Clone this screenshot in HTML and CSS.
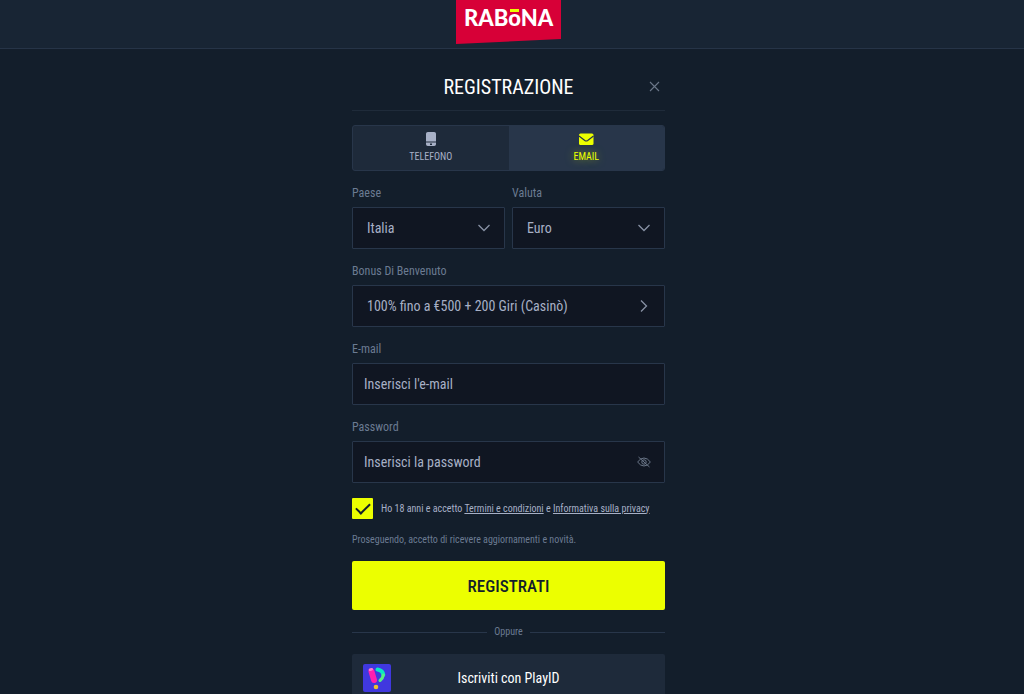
FILE: index.html
```html
<!DOCTYPE html>
<html lang="it">
<head>
<meta charset="utf-8">
<meta name="viewport" content="width=device-width, initial-scale=1">
<title>Registrazione</title>
<link rel="stylesheet" href="styles.css">
</head>
<body>
<header class="topbar">
  <a class="logo" href="#">
    <svg class="logo-shape" viewBox="0 0 105 45" preserveAspectRatio="none" aria-hidden="true"><path d="M0 0H105V39L0 44Z" fill="#d70037"/></svg>
    <span class="logo-text">RAB<span class="logo-o">o</span>NA</span>
  </a>
</header>
<main class="page">
  <form class="signup">
    <div class="signup-head">
      <h1 class="title">REGISTRAZIONE</h1>
      <button class="close" type="button" aria-label="Chiudi">
        <svg width="11" height="11" viewBox="0 0 11 11"><path d="M1 1L10 10M10 1L1 10" stroke="#6b7789" stroke-width="1.1"/></svg>
      </button>
    </div>
    <div class="tabs">
      <button class="tab" type="button">
        <svg width="16" height="16" viewBox="0 0 16 16"><path d="M4.800 1H11.200Q13 1 13 2.800V10.500H3V2.800Q3 1 4.800 1Z" fill="#a7b0c6"/><path fill-rule="evenodd" d="M3 11.500H13V13.200Q13 15 11.200 15H4.800Q3 15 3 13.200ZM7 12.500V14H9V12.500Z" fill="#a7b0c6"/></svg>
        <span>TELEFONO</span>
      </button>
      <button class="tab tab-active" type="button">
        <svg width="16" height="16" viewBox="0 0 16 16"><rect x="1" y="2.500" width="14.500" height="11.500" rx="1.500" fill="#ecff00"/><path d="M1 5L6.800 9.500Q8.250 10.500 9.700 9.500L15.500 5" fill="none" stroke="#28364a" stroke-width="1.200"/></svg>
        <span>EMAIL</span>
      </button>
    </div>
    <div class="pair">
      <div class="field">
        <label class="label" for="country">Paese</label>
        <div class="control">
          <select class="box" id="country"><option>Italia</option></select>
          <svg class="chevron" width="14" height="14" viewBox="0 0 14 14"><path d="M1.500 4L7 9.500L12.500 4" fill="none" stroke="#8791a4" stroke-width="1.300"/></svg>
        </div>
      </div>
      <div class="field">
        <label class="label" for="currency">Valuta</label>
        <div class="control">
          <select class="box" id="currency"><option>Euro</option></select>
          <svg class="chevron" width="14" height="14" viewBox="0 0 14 14"><path d="M1.500 4L7 9.500L12.500 4" fill="none" stroke="#8791a4" stroke-width="1.300"/></svg>
        </div>
      </div>
    </div>
    <div class="field">
      <label class="label" for="bonus">Bonus Di Benvenuto</label>
      <div class="control">
        <button class="box" id="bonus" type="button">100% fino a €500 + 200 Giri (Casinò)</button>
        <svg class="chevron" width="14" height="14" viewBox="0 0 14 14"><path d="M4 1.500L9.500 7L4 12.500" fill="none" stroke="#8791a4" stroke-width="1.300"/></svg>
      </div>
    </div>
    <div class="field">
      <label class="label" for="email">E-mail</label>
      <div class="control">
        <input class="box box-input" id="email" type="email" placeholder="Inserisci l'e-mail">
      </div>
    </div>
    <div class="field">
      <label class="label" for="password">Password</label>
      <div class="control">
        <input class="box box-input" id="password" type="password" placeholder="Inserisci la password">
        <button class="eye" type="button" aria-label="Mostra password">
          <svg width="14" height="12" viewBox="0 0 14 12" fill="none" stroke="#6b7789"><path d="M.6 6Q3.500 2 7 2T13.400 6Q10.500 10 7 10T.6 6Z"/><circle cx="7" cy="6" r="2.200"/><path d="M1.500 1L12.500 11"/></svg>
        </button>
      </div>
    </div>
    <div class="terms">
      <input class="tick" id="terms" type="checkbox" checked>
      <label class="terms-text" for="terms">Ho 18 anni e accetto <a href="#">Termini e condizioni</a> e <a href="#">Informativa sulla privacy</a></label>
    </div>
    <p class="note">Proseguendo, accetto di ricevere aggiornamenti e novità.</p>
    <button class="submit" type="submit">REGISTRATI</button>
    <div class="or"><span>Oppure</span></div>
    <button class="playid" type="button">
      <svg width="28" height="28" viewBox="0 0 28 28"><rect width="28" height="28" rx="2" fill="#4038df"/><path d="M8.500 7.500L11 16" stroke="#ff1fb0" stroke-width="6" stroke-linecap="round"/><path d="M7 5.800L8.800 5.200" stroke="#ff7ccf" stroke-width="2.500" stroke-linecap="round"/><path d="M14.500 5.500Q20 6.500 20.300 11" fill="none" stroke="#0ce8c4" stroke-width="4" stroke-linecap="round"/><path d="M20.300 11Q20 14 17 16.500" fill="none" stroke="#58f084" stroke-width="3" stroke-linecap="round"/><circle cx="13" cy="23" r="2.300" fill="#e9c52d"/></svg>
      <span>Iscriviti con PlayID</span>
    </button>
  </form>
</main>
</body>
</html>
```
FILE: styles.css
```css
* { box-sizing: border-box; }
html { height: 100%; }
body {
  margin: 0;
  height: 100%;
  overflow: hidden;
  background: #131e2b;
  color: #a7b0c6;
  font-family: "Roboto Condensed", Roboto, sans-serif;
  font-size: 14px;
}
button, input, select { font: inherit; color: inherit; margin: 0; }
button { border: 0; padding: 0; background: none; cursor: pointer; }
svg { display: block; flex: none; }

.topbar {
  display: flex;
  justify-content: center;
  height: 49px;
  padding-right: 7px;
  background: #182534;
  border-bottom: 1px solid #263447;
}
.logo {
  display: grid;
  width: 105px;
  height: 45px;
  color: #fff;
  text-decoration: none;
}
.logo-shape, .logo-text { grid-area: 1 / 1; }
.logo-shape { width: 100%; height: 100%; }
.logo-text {
  z-index: 1;
  justify-self: center;
  font: 900 22px/36px Lato, sans-serif;
}
.logo-o { position: relative; }
.logo-o::before {
  content: "";
  position: absolute;
  top: 5px;
  left: 2px;
  right: 2px;
  height: 3px;
  background: #ecff00;
}

.page {
  display: flex;
  justify-content: center;
  padding: 14px 7px 0 0;
}
.signup { width: 100%; max-width: 313px; }
.signup-head {
  display: grid;
  grid-template-columns: 1fr auto 1fr;
  align-items: center;
  height: 48px;
  border-bottom: 1px solid #1f2b3a;
}
.title {
  grid-column: 2;
  margin: 0;
  font-size: 20px;
  font-weight: 400;
  line-height: 24px;
  color: #fff;
}
.close { justify-self: end; padding: 5px; }

.tabs {
  display: grid;
  grid-template-columns: 1fr 1fr;
  height: 46px;
  margin: 14px 0 15px;
  border: 1px solid #28364a;
  border-radius: 3px;
  background: #1e2a3a;
  overflow: hidden;
}
.tab {
  display: flex;
  flex-direction: column;
  align-items: center;
  gap: 3px;
  padding-top: 5px;
  font-size: 10px;
  line-height: 14px;
}
.tab-active {
  background: #28364a;
  color: #ecff00;
  text-shadow: 0 0 8px #ecff0080;
}

.pair { display: grid; grid-template-columns: 1fr 1fr; gap: 7px; }
.field { margin-bottom: 15px; }
.label {
  display: block;
  margin-bottom: 7px;
  font-size: 12px;
  line-height: 14px;
  color: #6b7b92;
}
.control { display: grid; align-items: center; }
.control > * { grid-area: 1 / 1; }
.box {
  width: 100%;
  height: 42px;
  padding: 0 14px;
  border: 1px solid #28364a;
  border-radius: 1px;
  background: #101622;
  color: #a7b0c6;
  font-size: 14px;
  text-align: left;
  appearance: none;
}
.box-input { padding: 0 11px; }
.box::placeholder { color: #a7b0c6; opacity: 1; }
.chevron, .eye { justify-self: end; margin-right: 14px; }
.chevron { pointer-events: none; }

.terms { display: flex; align-items: center; gap: 8px; }
.tick {
  display: grid;
  place-items: center;
  flex: none;
  width: 21px;
  height: 21px;
  border-radius: 1px;
  background: #ecff00;
  appearance: none;
}
.tick:checked::before {
  content: "";
  width: 12px;
  height: 6px;
  margin-bottom: 4px;
  border: solid #131e2b;
  border-width: 0 0 2px 2px;
  transform: rotate(-45deg);
}
.terms-text, .note, .or { font-size: 10px; line-height: 14px; }
.terms-text a { color: inherit; }
.note { margin: 14px 0; color: #6b7b92; }
.submit {
  display: block;
  width: 100%;
  height: 49px;
  border-radius: 2px;
  background: #ecff00;
  color: #131e2b;
  font-size: 17px;
  font-weight: 500;
}
.or {
  display: flex;
  align-items: center;
  gap: 7px;
  margin: 15px 0;
  color: #6b7b92;
}
.or::before, .or::after {
  content: "";
  flex: 1;
  height: 1px;
  background: #28364a;
}
.playid {
  display: grid;
  grid-template-columns: 1fr auto 1fr;
  align-items: center;
  width: 100%;
  height: 48px;
  padding: 0 11px;
  border-radius: 2px;
  background: #1e2a3a;
  color: #fff;
}
```
